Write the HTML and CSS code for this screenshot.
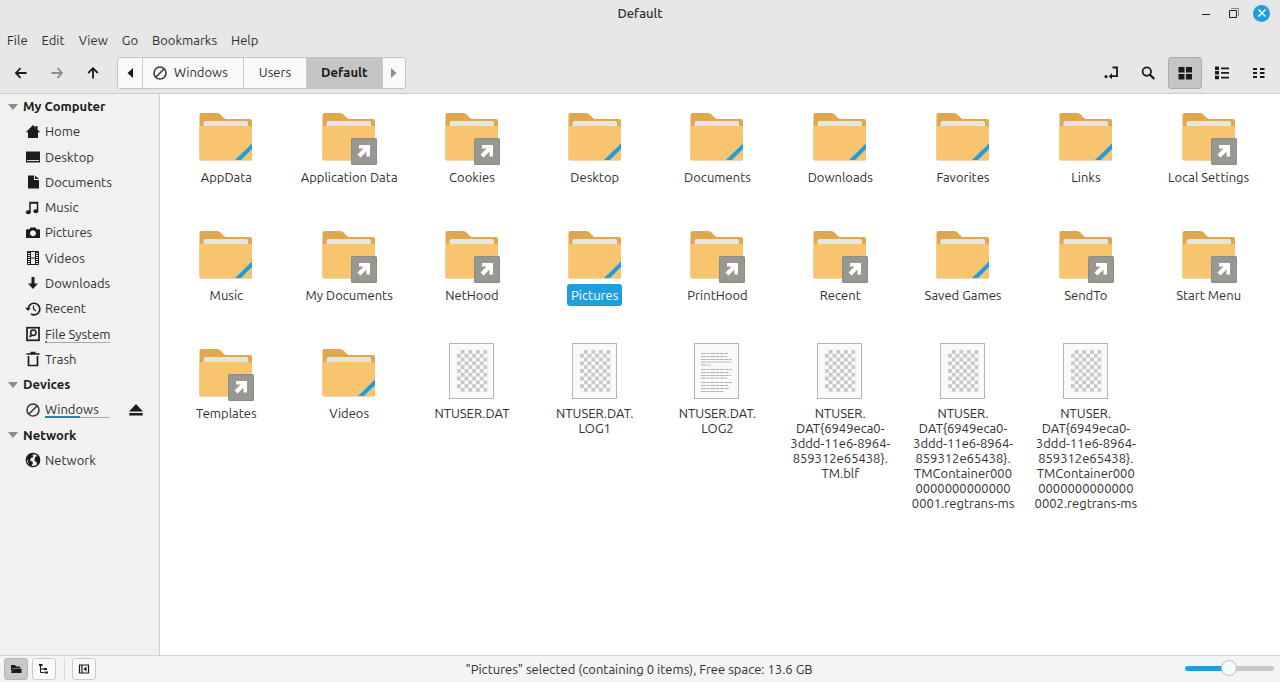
FILE: index.html
```html
<!DOCTYPE html>
<html lang="en">
<head>
<meta charset="utf-8">
<title>Default</title>
<link rel="stylesheet" href="styles.css">
</head>
<body>
<svg class="sprite" aria-hidden="true">
  <defs>
    <pattern id="checks" x="15" y="8" width="7.6" height="7.6" patternUnits="userSpaceOnUse">
      <path d="M3.8 0h3.8v3.8H3.8zM0 3.8h3.8v3.8H0z" fill="#c8c8c8"/>
    </pattern>
    <symbol id="folder" viewBox="0 0 60 60">
      <path d="M3.500 21V9a2 2 0 0 1 2-2H21c2 0 3 1 4 2l3 3c1 1 2 1 4 1h22a2 2 0 0 1 2 2v6z" fill="#dfa74e"/>
      <path d="M7.500 21v-4a2 2 0 0 1 2-2H50a2 2 0 0 1 2 2v4z" fill="#e4e4e4"/>
      <path d="M3.500 53V22c0-1.500 1-2 2-2H54c1 0 2 .5 2 2v31c0 1-1 1.500-2 1.500H5.500c-1 0-2-.5-2-1.500z" fill="#d9ae6b"/>
      <path d="M3.500 52V22c0-1.500 1-2 2-2H54c1 0 2 .5 2 2v30c0 1-1 2-2 2H5.500c-1 0-2-1-2-2z" fill="#f9c470"/>
    </symbol>
    <symbol id="stripe" viewBox="0 0 60 60"><path d="M39 54 56 37.500v5.500L45 54z" fill="#1f9ede"/></symbol>
    <symbol id="shortcut" viewBox="0 0 60 60">
      <rect x="32" y="32" width="26" height="27" rx="1.500" fill="#8d8b86"/>
      <rect x="33" y="33" width="24" height="25" rx="1" fill="#999792"/>
      <path d="M40 39h11v11.500h-3.500v-5l-6 6-3-3 6-6H40z" fill="#fff"/>
    </symbol>
    <symbol id="binary" viewBox="0 0 60 60">
      <rect x="7.500" y="1.500" width="44" height="55" fill="#fafafa" stroke="#b5b5b5"/>
      <path d="M15 8h30.400v41.800H15z" fill="url(#checks)"/>
    </symbol>
    <symbol id="textfile" viewBox="0 0 60 60">
      <rect x="7.500" y="1.500" width="44" height="55" fill="#fafafa" stroke="#b5b5b5"/>
      <path d="M14 11.500h27M14 14.500h26M14 17.500h31M14 20h30M14 23h10M14 27.500h31M14 30.500h28M14 33.500h30M14 36h26M14 40.500h31M14 43.500h27M14 46.500h29M14 49.500h22" fill="none" stroke="#aaa" stroke-width=".9" stroke-dasharray="5 .6 3 .6"/>
    </symbol>
    <symbol id="drive-none" viewBox="0 0 16 16"><path d="M2 8a6 6 0 1 0 12 0A6 6 0 1 0 2 8zM4 12 12 4" fill="none" stroke="#3a3a3a" stroke-width="1.600"/></symbol>
  </defs>
</svg>

<div class="window">
  <header class="titlebar">
    <h1 class="title">Default</h1>
    <div class="window-controls">
      <button class="window-button" aria-label="Minimize"><svg viewBox="0 0 16 16"><path d="M4 9.500h8" stroke="#222" /></svg></button>
      <button class="window-button" aria-label="Restore"><svg viewBox="0 0 16 16"><path d="M3.500 5.500h7v7h-7z" fill="none" stroke="#222"/><path d="M5 3.500h7.500V11" fill="none" stroke="#888"/></svg></button>
      <button class="window-button window-close" aria-label="Close"><svg viewBox="0 0 16 16"><path d="m4.500 4.500 7 7m0-7-7 7" stroke="#fff" stroke-width="1.500"/></svg></button>
    </div>
  </header>

  <nav class="menubar" aria-label="Menu">
    <button class="menu">File</button>
    <button class="menu">Edit</button>
    <button class="menu">View</button>
    <button class="menu">Go</button>
    <button class="menu">Bookmarks</button>
    <button class="menu">Help</button>
  </nav>

  <div class="toolbar">
    <div class="tools tools-nav">
      <button class="tool" aria-label="Back"><svg class="icon" viewBox="0 0 16 16"><path d="M13.500 8H4M7.500 3.200 3 8l4.500 4.800" fill="none" stroke="currentColor" stroke-width="1.800"/></svg></button>
      <button class="tool" aria-label="Forward" disabled><svg class="icon" viewBox="0 0 16 16"><path d="M2.500 8H12M8.500 3.200 13 8l-4.500 4.800" fill="none" stroke="currentColor" stroke-width="1.800"/></svg></button>
      <button class="tool" aria-label="Up"><svg class="icon" viewBox="0 0 16 16"><path d="M8 13.500V4M3.200 8 8 3.200 12.800 8" fill="none" stroke="currentColor" stroke-width="1.800"/></svg></button>
    </div>
    <nav class="pathbar" aria-label="Location">
      <button class="crumb crumb-arrow" aria-label="Earlier folders"><svg class="icon" viewBox="0 0 16 16"><path d="M11 3v10L5.500 8z" fill="currentColor"/></svg></button>
      <button class="crumb"><svg class="icon crumb-icon"><use href="#drive-none"/></svg>Windows</button>
      <button class="crumb">Users</button>
      <button class="crumb crumb-current" aria-current="page">Default</button>
      <button class="crumb crumb-arrow" aria-label="Later folders" disabled><svg class="icon" viewBox="0 0 16 16"><path d="M5 3v10l5.500-5z" fill="currentColor"/></svg></button>
    </nav>
    <div class="tools tools-view">
      <button class="tool" aria-label="Toggle location entry"><svg class="icon" viewBox="0 0 16 16"><path d="M9.500 2.500H14v8.700H8.500" fill="none" stroke="currentColor" stroke-width="1.800"/><path d="M9 8.200v6L5.700 11.200z" fill="currentColor"/><circle cx="3" cy="11.600" r="1.600" fill="currentColor"/></svg></button>
      <button class="tool" aria-label="Search"><svg class="icon" viewBox="0 0 16 16"><circle cx="6.800" cy="6.600" r="4.200" fill="none" stroke="currentColor" stroke-width="1.800"/><path d="m9.800 9.500 4.500 4.500" stroke="currentColor" stroke-width="2.200"/></svg></button>
      <button class="tool tool-active" aria-label="Icon view" aria-pressed="true"><svg class="icon" viewBox="0 0 16 16"><path d="M1.500 2h6v5.500h-6zM9 2h6v5.500H9zM1.500 9h6v5.500h-6zM9 9h6v5.500H9z" fill="currentColor"/></svg></button>
      <button class="tool" aria-label="List view"><svg class="icon" viewBox="0 0 16 16"><path d="M1 1.500h4v3.500H1zM1 6h4v3.500H1zM1 10.700h4v3.500H1zM7 2.500h8v1.700H7zM7 7h8v1.700H7zM7 11.700h8v1.700H7z" fill="currentColor"/></svg></button>
      <button class="tool" aria-label="Compact view"><svg class="icon" viewBox="0 0 16 16"><path d="M2 3h4v2H2zM2 7h4v2H2zM2 11h4v2H2zM9 3h4.500v2H9zM9 7h4.500v2H9zM9 11h4.500v2H9z" fill="currentColor"/></svg></button>
    </div>
  </div>

  <div class="body">
    <aside class="sidebar">
      <div class="places">
        <h2 class="group"><svg class="triangle" viewBox="0 0 10 6"><path d="M0 0h10L5 6z"/></svg>My Computer</h2>
        <a class="place" href="#"><svg class="icon" viewBox="0 0 16 16"><path d="M8 1 .8 8.200H3V14h10V8.200h2.200L12.500 5.500V2h-2v1.500z" fill="currentColor"/></svg><span class="place-name">Home</span></a>
        <a class="place" href="#"><svg class="icon" viewBox="0 0 16 16"><path d="M1 2.500h14v11H1z" fill="currentColor"/><path d="M2 11.500h12" stroke="#ddd"/></svg><span class="place-name">Desktop</span></a>
        <a class="place" href="#"><svg class="icon" viewBox="0 0 16 16"><path d="M3 1.500h6V6h5v8.500H3z" fill="currentColor"/><path d="M10 1.500 14 5h-4z" fill="currentColor"/></svg><span class="place-name">Documents</span></a>
        <a class="place" href="#"><svg class="icon" viewBox="0 0 16 16"><path d="M5 12V2.500h7.500V11M5 3h7.500" fill="none" stroke="currentColor" stroke-width="1.500"/><ellipse cx="3.300" cy="12.300" rx="2.400" ry="2" fill="currentColor"/><ellipse cx="10.800" cy="11.300" rx="2.400" ry="2" fill="currentColor"/></svg><span class="place-name">Music</span></a>
        <a class="place" href="#"><svg class="icon" viewBox="0 0 16 16"><path fill-rule="evenodd" d="M5.500 2.500h5l1 1.800H14a1 1 0 0 1 1 1V13H1V5.300a1 1 0 0 1 1-1h2.500zM8 5.300a3 3 0 1 0 .01 0z" fill="currentColor"/></svg><span class="place-name">Pictures</span></a>
        <a class="place" href="#"><svg class="icon" viewBox="0 0 16 16"><path d="M2.500 1.500h11v13h-11zM5.500 1.500v13M10.500 1.500v13M5.500 8h5" fill="none" stroke="currentColor"/><path d="M4 2v12M12 2v12" stroke="currentColor" stroke-width="2" stroke-dasharray="1 1"/></svg><span class="place-name">Videos</span></a>
        <a class="place" href="#"><svg class="icon" viewBox="0 0 16 16"><path d="M6.500 2h3v6.500H13L8 14 3 8.500h3.500z" fill="currentColor"/></svg><span class="place-name">Downloads</span></a>
        <a class="place" href="#"><svg class="icon" viewBox="0 0 16 16"><path d="M3.200 8.500A5.800 5.800 0 1 1 6 13" fill="none" stroke="currentColor" stroke-width="1.600"/><path d="M.3 6.800h5.400L3 10z" fill="currentColor"/><path d="M8.500 4.500V8l2.500 2" fill="none" stroke="currentColor" stroke-width="1.200"/></svg><span class="place-name">Recent</span></a>
        <a class="place" href="#"><svg class="icon" viewBox="0 0 16 16"><rect x="2" y="1.700" width="12" height="12.600" fill="none" stroke="currentColor" stroke-width="1.700"/><circle cx="8.300" cy="6.800" r="2.700" fill="none" stroke="currentColor" stroke-width="1.500"/><path d="M4.500 12V9l3 .8z" fill="currentColor"/></svg><span class="place-name place-usage">File System<span class="usage" style="width:3%"></span></span></a>
        <a class="place" href="#"><svg class="icon" viewBox="0 0 16 16"><path d="M3.500 5v9.500h9V5" fill="none" stroke="currentColor" stroke-width="1.700"/><path d="M1.500 3h13M5.500 1.500h5" stroke="currentColor" stroke-width="1.700"/></svg><span class="place-name">Trash</span></a>
        <h2 class="group"><svg class="triangle" viewBox="0 0 10 6"><path d="M0 0h10L5 6z"/></svg>Devices</h2>
        <div class="device">
          <a class="place" href="#"><svg class="icon"><use href="#drive-none"/></svg><span class="place-name place-usage">Windows<span class="usage" style="width:54%"></span></span></a>
          <button class="eject" aria-label="Eject Windows"><svg class="icon" viewBox="0 0 16 16"><path d="M8 2 15 9.500H1zM1.300 11h13.400v2.500H1.300z" fill="currentColor"/></svg></button>
        </div>
        <h2 class="group"><svg class="triangle" viewBox="0 0 10 6"><path d="M0 0h10L5 6z"/></svg>Network</h2>
        <a class="place" href="#"><svg class="icon" viewBox="0 0 16 16"><circle cx="8" cy="8" r="6.700" fill="#f1f1f1" stroke="currentColor" stroke-width="1.300"/><path d="M1.500 6 5 1.800l4-.3-1.500 2 1 1.500-2.500 1L5 8.500l3 1.500-.5 2L6 14.500 3.500 12 3 9zM10 5l3.500-1.500 1.500 4-1 4-2 1.500-.5-3L9.500 9z" fill="currentColor"/></svg><span class="place-name">Network</span></a>
      </div>
    </aside>

    <main class="files">
      <button class="file"><svg class="file-icon"><use href="#folder"/><use href="#stripe"/></svg><span class="file-name">AppData</span></button>
      <button class="file"><svg class="file-icon"><use href="#folder"/><use href="#shortcut"/></svg><span class="file-name">Application Data</span></button>
      <button class="file"><svg class="file-icon"><use href="#folder"/><use href="#shortcut"/></svg><span class="file-name">Cookies</span></button>
      <button class="file"><svg class="file-icon"><use href="#folder"/><use href="#stripe"/></svg><span class="file-name">Desktop</span></button>
      <button class="file"><svg class="file-icon"><use href="#folder"/><use href="#stripe"/></svg><span class="file-name">Documents</span></button>
      <button class="file"><svg class="file-icon"><use href="#folder"/><use href="#stripe"/></svg><span class="file-name">Downloads</span></button>
      <button class="file"><svg class="file-icon"><use href="#folder"/><use href="#stripe"/></svg><span class="file-name">Favorites</span></button>
      <button class="file"><svg class="file-icon"><use href="#folder"/><use href="#stripe"/></svg><span class="file-name">Links</span></button>
      <button class="file"><svg class="file-icon"><use href="#folder"/><use href="#shortcut"/></svg><span class="file-name">Local Settings</span></button>

      <button class="file"><svg class="file-icon"><use href="#folder"/><use href="#stripe"/></svg><span class="file-name">Music</span></button>
      <button class="file"><svg class="file-icon"><use href="#folder"/><use href="#shortcut"/></svg><span class="file-name">My Documents</span></button>
      <button class="file"><svg class="file-icon"><use href="#folder"/><use href="#shortcut"/></svg><span class="file-name">NetHood</span></button>
      <button class="file file-selected"><svg class="file-icon"><use href="#folder"/><use href="#stripe"/></svg><span class="file-name">Pictures</span></button>
      <button class="file"><svg class="file-icon"><use href="#folder"/><use href="#shortcut"/></svg><span class="file-name">PrintHood</span></button>
      <button class="file"><svg class="file-icon"><use href="#folder"/><use href="#shortcut"/></svg><span class="file-name">Recent</span></button>
      <button class="file"><svg class="file-icon"><use href="#folder"/><use href="#stripe"/></svg><span class="file-name">Saved Games</span></button>
      <button class="file"><svg class="file-icon"><use href="#folder"/><use href="#shortcut"/></svg><span class="file-name">SendTo</span></button>
      <button class="file"><svg class="file-icon"><use href="#folder"/><use href="#shortcut"/></svg><span class="file-name">Start Menu</span></button>

      <button class="file"><svg class="file-icon"><use href="#folder"/><use href="#shortcut"/></svg><span class="file-name">Templates</span></button>
      <button class="file"><svg class="file-icon"><use href="#folder"/><use href="#stripe"/></svg><span class="file-name">Videos</span></button>
      <button class="file"><svg class="file-icon"><use href="#binary"/></svg><span class="file-name">NTUSER.DAT</span></button>
      <button class="file"><svg class="file-icon"><use href="#binary"/></svg><span class="file-name">NTUSER.DAT.<br>LOG1</span></button>
      <button class="file"><svg class="file-icon"><use href="#textfile"/></svg><span class="file-name">NTUSER.DAT.<br>LOG2</span></button>
      <button class="file"><svg class="file-icon"><use href="#binary"/></svg><span class="file-name">NTUSER.<br>DAT{6949eca0-<br>3ddd-11e6-8964-<br>859312e65438}.<br>TM.blf</span></button>
      <button class="file"><svg class="file-icon"><use href="#binary"/></svg><span class="file-name">NTUSER.<br>DAT{6949eca0-<br>3ddd-11e6-8964-<br>859312e65438}.<br>TMContainer000<br>0000000000000<br>0001.regtrans-ms</span></button>
      <button class="file"><svg class="file-icon"><use href="#binary"/></svg><span class="file-name">NTUSER.<br>DAT{6949eca0-<br>3ddd-11e6-8964-<br>859312e65438}.<br>TMContainer000<br>0000000000000<br>0002.regtrans-ms</span></button>
    </main>
  </div>

  <footer class="statusbar">
    <div class="status-buttons">
      <button class="status-button status-button-active" aria-label="Places" aria-pressed="true"><svg class="status-icon" viewBox="0 0 12 12"><path d="M1 2h4l1 1.500h4V5H3L1 9z" fill="currentColor"/><path d="M3 5.500h8.500V10H1z" fill="currentColor"/></svg></button>
      <button class="status-button" aria-label="Tree"><svg class="status-icon" viewBox="0 0 12 12"><path d="M2.500 2v7.500H6M2.500 6H6" fill="none" stroke="currentColor"/><path d="M1 1h3.500v2H1zM6 5h3v2H6zM6.500 8.500H10v2H6.500z" fill="currentColor"/></svg></button>
      <span class="separator"></span>
      <button class="status-button" aria-label="Hide sidebar"><svg class="status-icon" viewBox="0 0 12 12"><path d="M1.500 2h9v8h-9zM4 2v8" fill="none" stroke="currentColor" stroke-width="1.200"/><path d="M8.500 3.500v5l-3-2.500z" fill="currentColor"/></svg></button>
    </div>
    <p class="status-text">"Pictures" selected (containing 0 items), Free space: 13.6 GB</p>
    <input class="zoom" type="range" min="0" max="100" value="49" aria-label="Zoom">
  </footer>
</div>
</body>
</html>
```

FILE: styles.css
```css
* {
  box-sizing: border-box;
}

body {
  margin: 0;
  color: #303030;
  background: #e7e7e7;
  font: 13px/15px Ubuntu, "Noto Sans", sans-serif;
}

button {
  margin: 0;
  padding: 0;
  border: 0;
  background: none;
  color: inherit;
  font: inherit;
}

svg {
  display: block;
  flex: none;
}

.sprite {
  position: absolute;
  width: 0;
  height: 0;
}

.icon {
  width: 16px;
  height: 16px;
}

.window {
  display: flex;
  flex-direction: column;
  min-height: 100vh;
}

.titlebar {
  display: grid;
  grid-template-columns: 1fr auto 1fr;
  align-items: center;
  height: 27px;
  padding: 0 10px 1px;
}

.title {
  grid-column: 2;
  margin: 0;
  font-size: 13px;
  font-weight: 500;
}

.window-controls {
  display: flex;
  justify-content: flex-end;
  gap: 11px;
}

.window-button {
  display: grid;
  place-items: center;
  width: 17px;
  height: 17px;
}

.window-button svg {
  width: 16px;
  height: 16px;
}

.window-close {
  border-radius: 50%;
  background: #1f9ede;
}

.menubar {
  display: flex;
  height: 26px;
}

.menu {
  padding: 0 7px;
}

.toolbar {
  display: flex;
  align-items: center;
  height: 41px;
  padding: 0 4px 1px;
  border-bottom: 1px solid #cdcdcd;
}

.tools {
  display: flex;
  color: #1a1a1a;
}

.tools-nav {
  gap: 2px;
}

.tools-view {
  gap: 3px;
  margin-left: auto;
}

.tool {
  display: grid;
  place-items: center;
  width: 34px;
  height: 32px;
  border: 1px solid transparent;
  border-radius: 3px;
}

.tool:disabled {
  color: #8c8c8c;
}

.tool-active {
  border-color: #acacac;
  background: #c5c5c5;
}

.pathbar {
  display: flex;
  margin-left: 7px;
  height: 32px;
  border: 1px solid #c3c3c3;
  border-radius: 3px;
  background: #f9f9f9;
  overflow: hidden;
}

.crumb {
  display: flex;
  align-items: center;
  padding: 0 15px;
}

.crumb + .crumb {
  border-left: 1px solid #c9c9c9;
}

.crumb-icon {
  margin: 0 6px 0 -6px;
}

.crumb-arrow {
  padding: 0 4px;
  color: #1a1a1a;
}

.crumb-arrow:disabled {
  padding: 0 3px;
  color: #8c8c8c;
}

.crumb-current {
  padding: 0 14px;
  background: #c5c5c5;
  color: #1a1a1a;
  font-weight: 700;
}

.body {
  display: flex;
  flex: 1;
}

.sidebar {
  flex: none;
  width: 160px;
  border-right: 1px solid #cdcdcd;
  background: #f1f1f1;
}

.places {
  display: grid;
  grid-auto-rows: 1fr;
  min-height: 379px;
}

.group {
  display: flex;
  align-items: center;
  gap: 5px;
  margin: 0;
  padding-left: 8px;
  color: #1c1c1c;
  font-size: 13px;
}

.triangle {
  width: 10px;
  height: 6px;
  fill: #8c8c8c;
}

.place {
  display: flex;
  align-items: center;
  gap: 4px;
  padding-left: 25px;
  color: inherit;
  text-decoration: none;
}

.place .icon,
.eject {
  color: #1c1c1c;
}

.place-usage {
  position: relative;
  width: 65px;
  white-space: nowrap;
}

.place-usage::after,
.usage {
  position: absolute;
  bottom: -1px;
  left: 0;
  height: 1px;
}

.place-usage::after {
  content: "";
  width: 100%;
  background: #a9a9a9;
}

.usage {
  z-index: 1;
  height: 2px;
  background: #1b85bd;
}

.device {
  display: flex;
  align-items: center;
  justify-content: space-between;
  padding-right: 15px;
}

.files {
  display: grid;
  flex: 1;
  grid-template-columns: repeat(auto-fill, minmax(120px, 1fr));
  grid-auto-rows: minmax(118px, max-content);
  align-content: start;
  padding: 12px 10px 12px 5px;
  background: #fff;
}

.file {
  display: flex;
  flex-direction: column;
  align-items: center;
}

.file-icon {
  width: 60px;
  height: 60px;
}

.file-name {
  padding: 4px 4px 3px;
  border-radius: 3px;
}

.file-selected .file-name {
  background: #1f9ede;
  color: #fff;
}

.statusbar {
  display: grid;
  grid-template-columns: 1fr auto 1fr;
  align-items: center;
  height: 27px;
  padding: 0 6px 0 4px;
  border-top: 1px solid #d3d3d3;
  background: #f4f4f4;
}

.status-buttons {
  display: flex;
  align-items: center;
  gap: 4px;
}

.status-button {
  display: grid;
  place-items: center;
  width: 24px;
  height: 22px;
  border: 1px solid #cbcbcb;
  border-radius: 3px;
  background: #fafafa;
  color: #1a1a1a;
}

.status-button-active {
  border-color: #b5b5b5;
  background: #c8c8c8;
}

.status-icon {
  width: 12px;
  height: 12px;
}

.separator {
  width: 1px;
  height: 22px;
  margin: 0 3px 0 4px;
  background: #dcdcdc;
}

.status-text {
  margin: 0;
}

.zoom {
  justify-self: end;
  width: 89px;
  height: 16px;
  margin: 0 0 2px;
  background: none;
  appearance: none;
}

.zoom::-webkit-slider-runnable-track {
  height: 5px;
  border-radius: 3px;
  background: linear-gradient(90deg, #1f9ede 50%, #c9c9c9 50%);
}

.zoom::-webkit-slider-thumb {
  width: 16px;
  height: 16px;
  margin-top: -6px;
  border: 1px solid #bcbcbc;
  border-radius: 50%;
  background: #fafafa;
  appearance: none;
}
```
